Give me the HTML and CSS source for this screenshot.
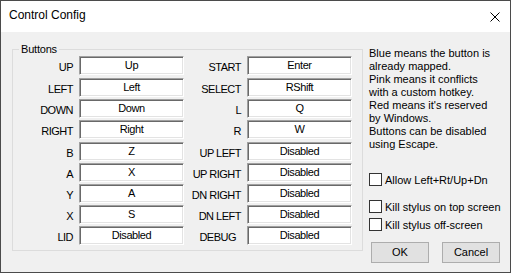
FILE: index.html
```html
<!DOCTYPE html>
<html lang="en">
<head>
<meta charset="utf-8">
<title>Control Config</title>
<link rel="stylesheet" href="styles.css">
</head>
<body>
<div class="window">
  <div class="titlebar">
    <span class="title">Control Config</span>
    <svg class="close" width="10" height="10" viewBox="0 0 10 10"><path d="M0.5 0.5 L9.5 9.5 M9.5 0.5 L0.5 9.5" stroke="#000" stroke-width="1" fill="none"/></svg>
  </div>
  <div class="client">
    <fieldset class="group">
      <legend>Buttons</legend>
      <div class="grid">
        <span class="lbl">UP</span><div class="key">Up</div><span class="lbl">START</span><div class="key">Enter</div>
        <span class="lbl">LEFT</span><div class="key">Left</div><span class="lbl">SELECT</span><div class="key">RShift</div>
        <span class="lbl">DOWN</span><div class="key">Down</div><span class="lbl">L</span><div class="key">Q</div>
        <span class="lbl">RIGHT</span><div class="key">Right</div><span class="lbl">R</span><div class="key">W</div>
        <span class="lbl">B</span><div class="key">Z</div><span class="lbl">UP LEFT</span><div class="key">Disabled</div>
        <span class="lbl">A</span><div class="key">X</div><span class="lbl">UP RIGHT</span><div class="key">Disabled</div>
        <span class="lbl">Y</span><div class="key">A</div><span class="lbl">DN RIGHT</span><div class="key">Disabled</div>
        <span class="lbl">X</span><div class="key">S</div><span class="lbl">DN LEFT</span><div class="key">Disabled</div>
        <span class="lbl">LID</span><div class="key">Disabled</div><span class="lbl lbl-debug">DEBUG</span><div class="key">Disabled</div>
      </div>
    </fieldset>
    <div class="side">
      <p class="desc">Blue means the button is<br>already mapped.<br>Pink means it conflicts<br>with a custom hotkey.<br>Red means it's reserved<br>by Windows.<br>Buttons can be disabled<br>using Escape.</p>
      <label class="check check-1"><span class="box"></span><span class="check-text">Allow Left+Rt/Up+Dn</span></label>
      <label class="check check-2"><span class="box"></span><span class="check-text">Kill stylus on top screen</span></label>
      <label class="check check-3"><span class="box"></span><span class="check-text">Kill stylus off-screen</span></label>
      <div class="buttons">
        <button class="btn btn-ok">OK</button>
        <button class="btn btn-cancel">Cancel</button>
      </div>
    </div>
  </div>
</div>
</body>
</html>
```

FILE: styles.css
```css
html, body {
  margin: 0;
  padding: 0;
  background: #f0f0f0;
}

body {
  font-family: "Liberation Sans", Arial, sans-serif;
  font-size: 11px;
  color: #000;
}

.window {
  box-sizing: border-box;
  width: 511px;
  height: 273px;
  border: 1px solid #4b4b4b;
  background: #f0f0f0;
  display: flex;
  flex-direction: column;
}

.titlebar {
  height: 31px;
  flex: none;
  background: #fff;
  display: flex;
  align-items: center;
  justify-content: space-between;
  padding: 0 10px 0 8px;
}

.title {
  font-size: 12px;
  line-height: 29px;
  padding-bottom: 2px;
}

.close {
  display: block;
  margin-top: 1px;
}

.client {
  flex: 1;
  display: flex;
  align-items: flex-start;
}

.group {
  margin: 11px 0 0 11px;
  padding: 0 10px 5px 0;
  border: 1px solid #dcdcdc;
  width: 339px;
  min-width: 0;
}

.group legend {
  margin-left: 6px;
  padding: 0 2px;
  line-height: 13px;
  letter-spacing: -0.2px;
}

.grid {
  display: grid;
  grid-template-columns: 66px 105px 63px 105px;
  grid-template-rows: 22px 21px 21px 22px 21px 21px 21px 21px 19px;
}

.lbl {
  text-align: right;
  padding: 2px 6px 0 0;
  line-height: 19px;
  letter-spacing: -0.5px;
  white-space: nowrap;
}

.lbl-debug {
  padding-right: 11px;
}

.key {
  box-sizing: border-box;
  height: 19px;
  background: #fff;
  border: 1px solid;
  border-color: #a0a0a0 #fff #fff #a0a0a0;
  box-shadow: inset 1px 1px #696969, inset -1px -1px #e3e3e3;
  text-align: center;
  line-height: 17px;
  letter-spacing: -0.4px;
  white-space: nowrap;
}

.side {
  margin: 15px 0 0 6px;
  display: flex;
  flex-direction: column;
  align-items: flex-start;
}

.desc {
  margin: 0;
  line-height: 13px;
  white-space: nowrap;
}

.check {
  display: flex;
  align-items: center;
  height: 13px;
  white-space: nowrap;
}

.check-1 { margin-top: 22px; }
.check-2 { margin-top: 14px; }
.check-3 { margin-top: 5px; }

.box {
  box-sizing: border-box;
  width: 13px;
  height: 13px;
  border: 1px solid #333;
  background: #fff;
  flex: none;
}

.check-text {
  margin-left: 3px;
  line-height: 13px;
  padding-top: 1px;
}

.buttons {
  display: flex;
  margin: 11px 0 0 2px;
  gap: 13px;
}

.btn {
  box-sizing: border-box;
  width: 58px;
  height: 21px;
  padding: 0;
  border: 1px solid #adadad;
  background: #e1e1e1;
  font-family: "Liberation Sans", Arial, sans-serif;
  font-size: 11px;
  color: #000;
  line-height: 19px;
}
```
